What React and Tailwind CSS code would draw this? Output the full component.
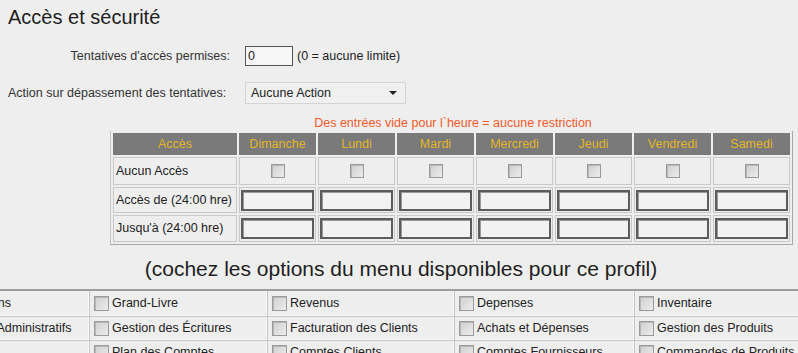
import React from "react";

const days = ["Dimanche", "Lundi", "Mardi", "Mercredi", "Jeudi", "Vendredi", "Samedi"];

const menuRows = [
  ["Permissions", "Grand-Livre", "Revenus", "Depenses", "Inventaire"],
  ["Rapports Administratifs", "Gestion des Écritures", "Facturation des Clients", "Achats et Dépenses", "Gestion des Produits"],
  ["", "Plan des Comptes", "Comptes Clients", "Comptes Fournisseurs", "Commandes de Produits"],
];

const Box = ({ className = "" }) => (
  <span className={"inline-block shrink-0 border border-[#9a9a9a] bg-gradient-to-br from-[#cfcfcf] to-[#ececec] shadow-[inset_1px_1px_0_#b8b8b8] " + className} />
);

const TimeInput = () => (
  <div className="h-[21px] w-full border-2 border-[#5c5c5c] bg-[#f2f2f2] shadow-[inset_1px_1px_0_#9a9a9a]" />
);

export default function App() {
  return (
    <div
      className="w-[798px] h-[353px] overflow-hidden bg-[#eeeeee] text-[#222] text-[12.5px]"
      style={{ fontFamily: "Tahoma, 'Liberation Sans', Arial, sans-serif" }}
    >
      <h1 className="pl-[8px] pt-[5px] text-[20px] leading-[24px] text-[#1e1e1e]">Accès et sécurité</h1>

      <div className="mt-[17px] grid grid-cols-[230px_auto] gap-x-[15px] items-center">
        <div className="text-right text-[#333]">Tentatives d'accès permises:</div>
        <div className="flex items-center gap-[4px]">
          <div className="w-[48px] h-[20px] border border-[#555] bg-[#f6f6f6] pl-[2px] leading-[18px]">0</div>
          <span>(0 = aucune limite)</span>
        </div>
        <div className="pl-[8px] mt-[16px] text-[#333] whitespace-nowrap">Action sur dépassement des tentatives:</div>
        <div className="mt-[16px] w-[161px] h-[22px] border border-[#d4d4d4] bg-[#f0f0f0] flex items-center justify-between pl-[5px] pr-[8px]">
          <span>Aucune Action</span>
          <span className="w-0 h-0 border-l-[4px] border-r-[4px] border-t-[4px] border-l-transparent border-r-transparent border-t-[#222]" />
        </div>
      </div>

      <div className="mt-[12px] ml-[110px] w-[683px]">
        <div className="text-center text-[#f05a2a] leading-[14px] pl-[3px]">Des entrées vide pour l`heure = aucune restriction</div>
        <table className="mt-[1px] w-full table-fixed border-separate border-spacing-[2px] border border-[#a8a8a8] border-t-0 border-l-[#c4c4c4] bg-[#eeeeee]">
          <colgroup>
            <col className="w-[124px]" />
            {days.map((d) => (
              <col key={d} />
            ))}
          </colgroup>
          <thead>
            <tr>
              <th className="h-[22px] bg-[#7a7a7a] text-[#e2b52a] font-normal">Accès</th>
              {days.map((d) => (
                <th key={d} className="bg-[#7a7a7a] text-[#e2b52a] font-normal">{d}</th>
              ))}
            </tr>
          </thead>
          <tbody>
            <tr>
              <td className="h-[28px] border border-[#c8c8c8] pl-[2px] whitespace-nowrap">Aucun Accès</td>
              {days.map((d) => (
                <td key={d} className="border border-[#c8c8c8] text-center align-middle">
                  <Box className="w-[14px] h-[14px] align-middle" />
                </td>
              ))}
            </tr>
            <tr>
              <td className="h-[26px] border border-[#c8c8c8] pl-[2px] whitespace-nowrap">Accès de (24:00 hre)</td>
              {days.map((d) => (
                <td key={d} className="border border-[#c8c8c8] px-[1px]">
                  <TimeInput />
                </td>
              ))}
            </tr>
            <tr>
              <td className="h-[27px] border border-[#c8c8c8] pl-[2px] whitespace-nowrap">Jusqu'à (24:00 hre)</td>
              {days.map((d) => (
                <td key={d} className="border border-[#c8c8c8] px-[1px]">
                  <TimeInput />
                </td>
              ))}
            </tr>
          </tbody>
        </table>
      </div>

      <div className="mt-[11px] text-center text-[21px] leading-[26px] text-[#1e1e1e] pl-[4px]">
        (cochez les options du menu disponibles pour ce profil)
      </div>

      <div className="mt-[7px] -ml-[61px] w-[900px] border-t-2 border-[#9c9c9c]">
        {menuRows.map((row, i) => (
          <div key={i} className={"grid grid-cols-[151px_178px_187px_180px_203px] " + (i === 0 ? "h-[26px]" : "h-[24px]")}>
            {row.map((cell, j) => (
              <div key={j} className="border-b border-r border-[#c6c6c6] shadow-[inset_-1px_-1px_0_#f8f8f8] flex items-center pl-[4px] gap-[3px] whitespace-nowrap overflow-hidden">
                {j === 0 ? (
                  <span>{cell}</span>
                ) : (
                  <>
                    <Box className="w-[15px] h-[15px]" />
                    <span>{cell}</span>
                  </>
                )}
              </div>
            ))}
          </div>
        ))}
      </div>
    </div>
  );
}
